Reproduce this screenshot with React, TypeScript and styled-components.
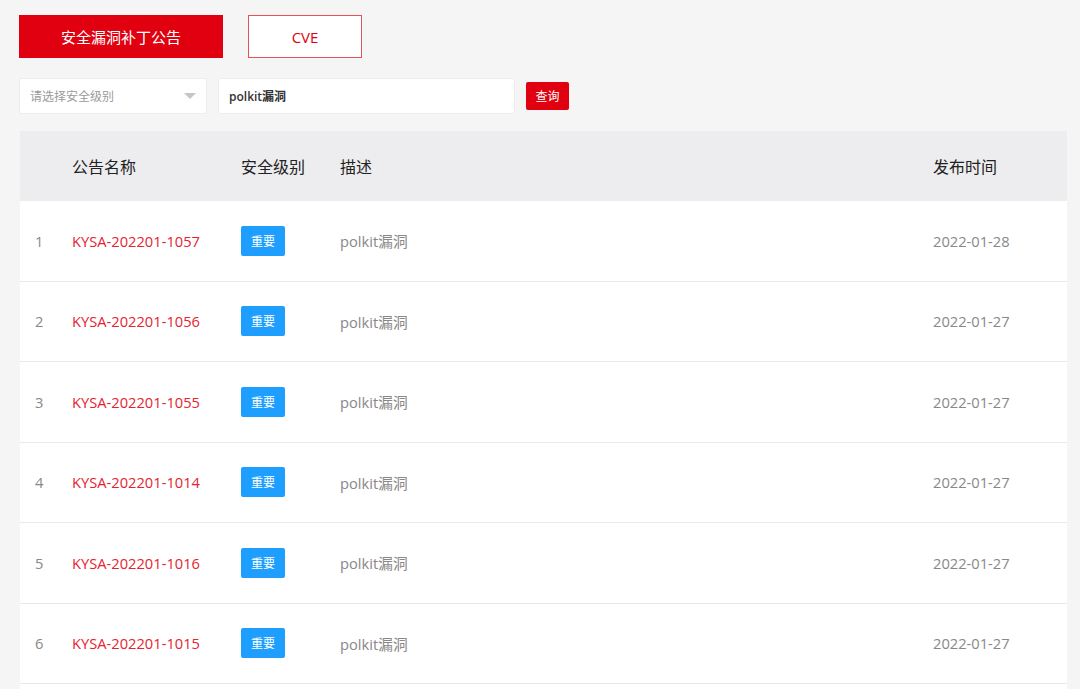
import styled, { createGlobalStyle } from "styled-components";

const GlobalStyle = createGlobalStyle`
  html, body {
    margin: 0;
    padding: 0;
    background: #f5f5f6;
    font-family: "Open Sans", "Noto Sans CJK SC", sans-serif;
  }
`;

const Page = styled.div`
  width: 1080px;
  height: 689px;
  padding: 15px 0 0 19px;
  box-sizing: border-box;
  overflow: hidden;
`;

const Tabs = styled.div`
  display: flex;
  gap: 25px;
  height: 43px;
`;

const Tab = styled.button<{ $active?: boolean }>`
  height: 43px;
  width: ${(p) => (p.$active ? "204px" : "114px")};
  padding: 0;
  font-family: "Open Sans", "Noto Sans CJK SC", sans-serif;
  font-size: 15px;
  cursor: pointer;
  background: ${(p) => (p.$active ? "#e0000f" : "#ffffff")};
  color: ${(p) => (p.$active ? "#ffffff" : "#e0000f")};
  border: 1px solid ${(p) => (p.$active ? "#e0000f" : "#e8515a")};
`;

const Filters = styled.div`
  display: flex;
  align-items: center;
  margin-top: 20px;
  height: 36px;
`;

const SelectBox = styled.div`
  width: 188px;
  height: 36px;
  box-sizing: border-box;
  background: #ffffff;
  border: 1px solid #ededed;
  border-radius: 2px;
  display: flex;
  align-items: center;
  justify-content: space-between;
  padding: 0 10px 0 10px;
  span {
    font-size: 12px;
    color: #9a9a9a;
  }
`;

const Caret = styled.i`
  width: 0;
  height: 0;
  border-left: 6px solid transparent;
  border-right: 6px solid transparent;
  border-top: 6px solid #c6c6c6;
`;

const SearchInput = styled.input`
  width: 297px;
  height: 36px;
  box-sizing: border-box;
  margin-left: 11px;
  border: 1px solid #ededed;
  border-radius: 2px;
  background: #ffffff;
  padding: 0 10px;
  font-family: "Open Sans", "Noto Sans CJK SC", sans-serif;
  font-size: 12px;
  font-weight: 600;
  color: #333333;
  outline: none;
`;

const QueryButton = styled.button`
  margin-left: 11px;
  width: 43px;
  height: 28px;
  padding: 0;
  border: 0;
  border-radius: 2px;
  background: #e0000f;
  color: #ffffff;
  font-family: "Open Sans", "Noto Sans CJK SC", sans-serif;
  font-size: 12px;
  cursor: pointer;
`;

const Table = styled.div`
  margin-top: 17px;
  margin-left: 1px;
  width: 1047px;
  padding-bottom: 20px;
  background: #ffffff;
`;

const Row = styled.div<{ $head?: boolean }>`
  display: grid;
  grid-template-columns: 52px 169px 99px 593px 1fr;
  align-items: center;
  height: ${(p) => (p.$head ? "70px" : "80.5px")};
  box-sizing: border-box;
  background: ${(p) => (p.$head ? "#ededef" : "#ffffff")};
  border-bottom: ${(p) => (p.$head ? "none" : "1px solid #e9e9eb")};
  font-size: ${(p) => (p.$head ? "16px" : "14.7px")};
  color: ${(p) => (p.$head ? "#222222" : "#888888")};
`;

const Index = styled.div`
  padding-left: 15px;
  color: #888888;
`;

const Name = styled.div`
  color: #e5242f;
`;

const Badge = styled.span`
  display: inline-flex;
  align-items: center;
  justify-content: center;
  width: 44px;
  height: 30px;
  border-radius: 2px;
  background: #1e9fff;
  color: #ffffff;
  font-size: 12px;
`;

const Cell = styled.div``;

const rows = [
  { id: "KYSA-202201-1057", date: "2022-01-28" },
  { id: "KYSA-202201-1056", date: "2022-01-27" },
  { id: "KYSA-202201-1055", date: "2022-01-27" },
  { id: "KYSA-202201-1014", date: "2022-01-27" },
  { id: "KYSA-202201-1016", date: "2022-01-27" },
  { id: "KYSA-202201-1015", date: "2022-01-27" },
];

export default function App() {
  return (
    <Page>
      <GlobalStyle />
      <Tabs>
        <Tab $active>安全漏洞补丁公告</Tab>
        <Tab>CVE</Tab>
      </Tabs>
      <Filters>
        <SelectBox>
          <span>请选择安全级别</span>
          <Caret />
        </SelectBox>
        <SearchInput defaultValue="polkit漏洞" />
        <QueryButton>查询</QueryButton>
      </Filters>
      <Table>
        <Row $head>
          <Cell />
          <Cell>公告名称</Cell>
          <Cell>安全级别</Cell>
          <Cell>描述</Cell>
          <Cell>发布时间</Cell>
        </Row>
        {rows.map((r, i) => (
          <Row key={r.id}>
            <Index>{i + 1}</Index>
            <Name>{r.id}</Name>
            <Cell>
              <Badge>重要</Badge>
            </Cell>
            <Cell>polkit漏洞</Cell>
            <Cell>{r.date}</Cell>
          </Row>
        ))}
      </Table>
    </Page>
  );
}
